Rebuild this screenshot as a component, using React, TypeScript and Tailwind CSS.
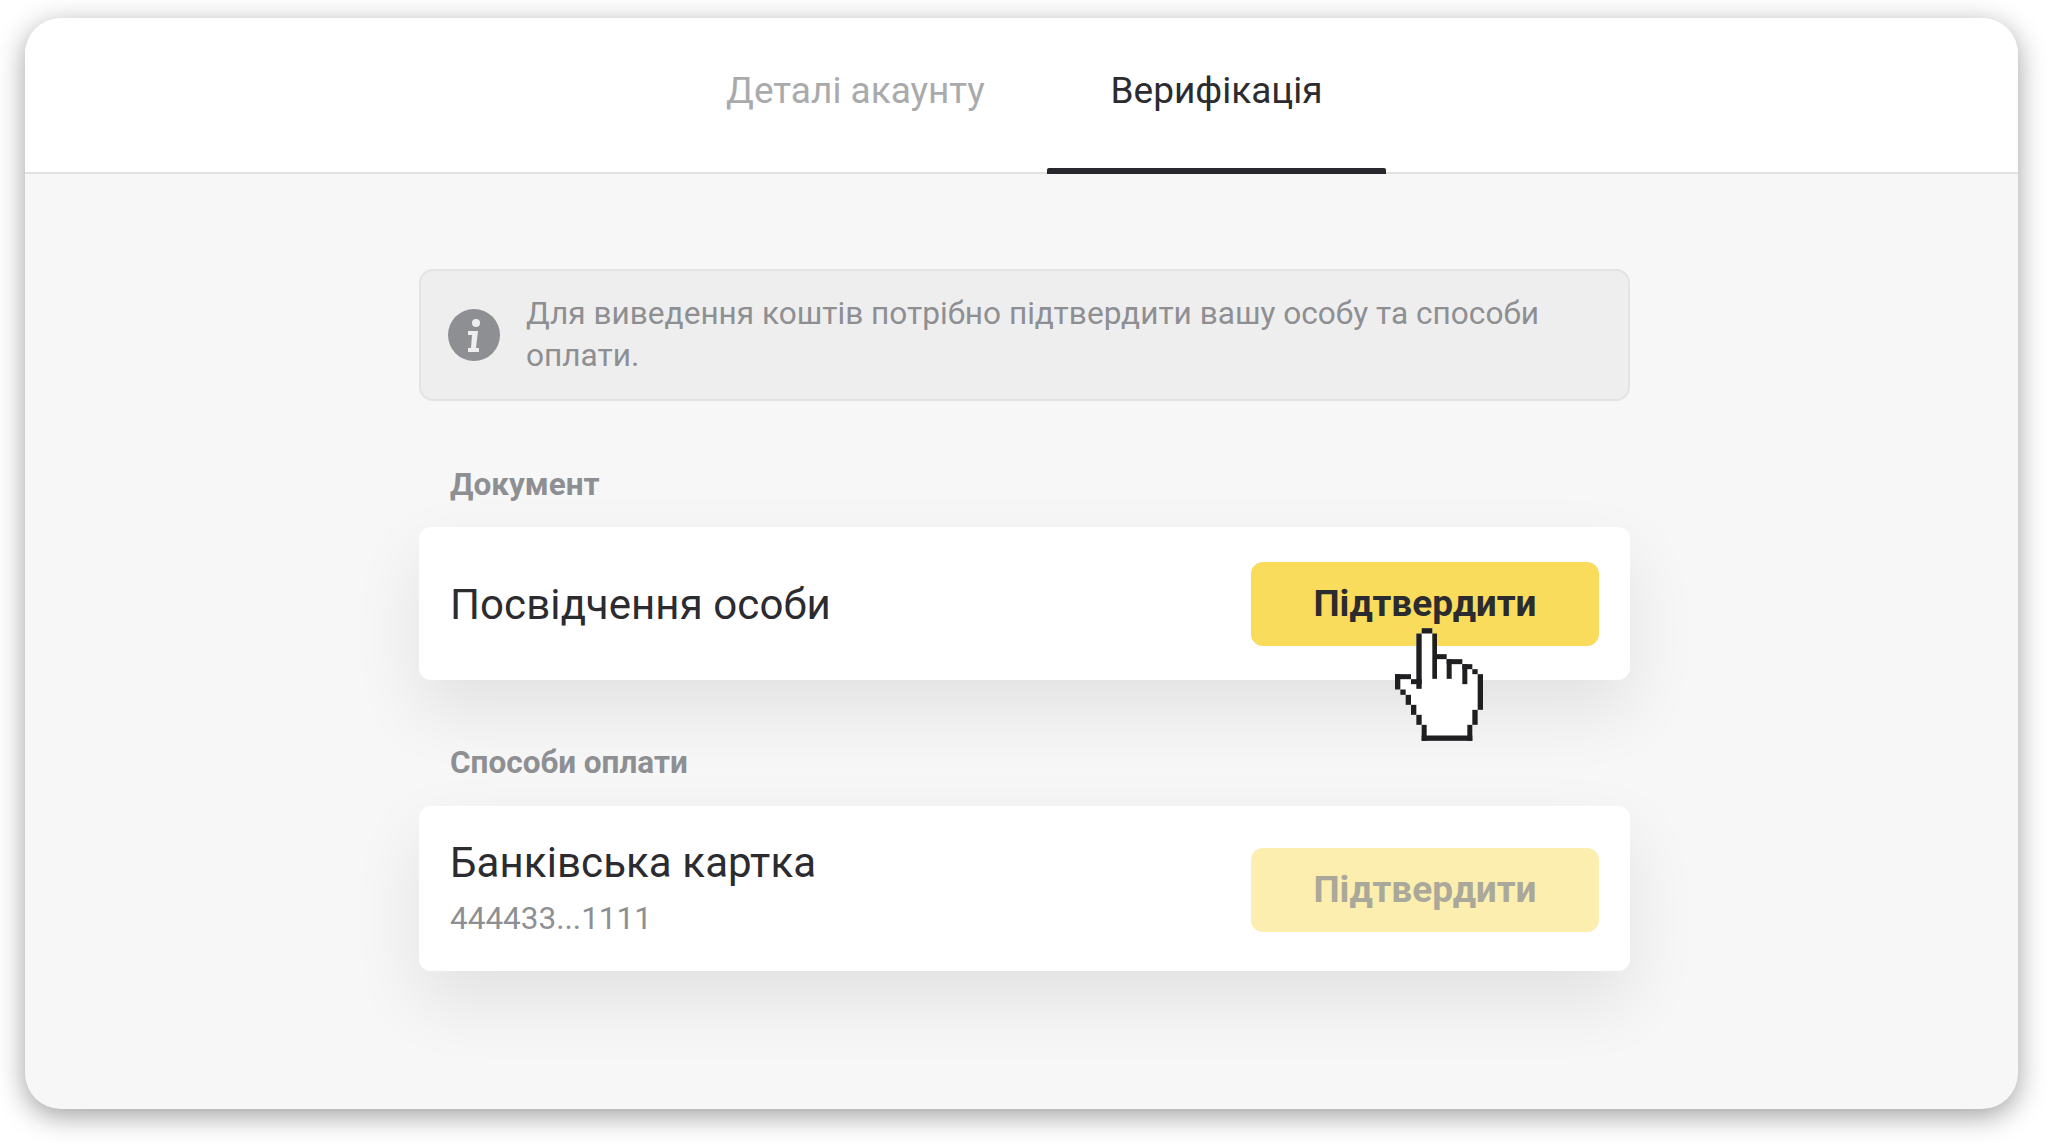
const FONT = "font-['Roboto','Noto_Sans',sans-serif]";

function InfoIcon() {
  return (
    <svg width="52" height="52" viewBox="0 0 52 52" className="shrink-0">
      <circle cx="26" cy="26" r="26" fill="#8e8f92" />
      <circle cx="28" cy="14" r="4" fill="#eeeeee" />
      <path d="M20 22h10l-2 17h3v4H20v-4h3l1-13h-4z" fill="#eeeeee" />
    </svg>
  );
}

function HandCursor() {
  const outline = [
    [245, 265, 32, 16], [229, 281, 16, 166], [277, 281, 14, 136], [291, 343, 29, 15],
    [320, 358, 15, 59], [320, 358, 47, 15], [367, 373, 15, 60], [367, 373, 30, 15],
    [397, 388, 16, 15], [413, 403, 16, 107], [397, 510, 16, 45], [382, 555, 15, 48],
    [245, 587, 152, 16], [245, 555, 15, 48], [229, 525, 16, 30], [213, 495, 16, 30],
    [197, 465, 16, 30], [181, 449, 16, 16], [165, 403, 16, 46], [165, 403, 48, 15],
    [213, 418, 32, 15],
  ];
  return (
    <svg
      width="88"
      height="113"
      viewBox="165 265 264 338"
      className="absolute left-[1395px] top-[628px]"
    >
      <path
        d="M245 265h32v78h43v15h47v15h30v15h16v15h16v107h-16v45h-15v48H245v-48h-16v-30h-16v-30h-16v-30h-16v-16h-16v-46h48v15h16V281h16z"
        fill="#ffffff"
      />
      {outline.map(([x, y, w, h], i) => (
        <rect key={i} x={x} y={y} width={w} height={h} fill="#1f1f21" />
      ))}
    </svg>
  );
}

export default function App() {
  return (
    <div className={`relative w-[2048px] h-[1145px] bg-white overflow-hidden pt-[18px] px-[25px] ${FONT}`}>
      <div className="w-[1993px] h-[1091px] rounded-[36px] bg-[#f7f7f7] overflow-hidden flex flex-col shadow-[0_7px_28px_rgba(0,0,0,0.38)]">
        <div className="h-[156px] shrink-0 bg-white border-b-2 border-[#e2e2e2] flex pl-[661px] gap-[22px]">
          <div className="w-[339px] flex items-center justify-center pb-[9px] text-[37px] text-[#a9aaac]">
            Деталі акаунту
          </div>
          <div className="relative w-[339px] flex items-center justify-center pb-[9px] text-[37px] text-[#2b2b30]">
            Верифікація
            <div className="absolute left-0 right-0 -bottom-[2px] h-[6px] bg-[#27272c] rounded-t-[2px]" />
          </div>
        </div>

        <div className="w-[1211px] ml-[394px] pt-[95px] flex flex-col">
          <div className="h-[132px] rounded-[14px] bg-[#eeeeee] border-2 border-[#e3e3e3] flex items-center pl-[27px] pr-[60px] gap-[26px]">
            <InfoIcon />
            <div className="text-[31.600px] leading-[42px] text-[#8e8f92]">
              Для виведення коштів потрібно підтвердити вашу особу та способи оплати.
            </div>
          </div>

          <div className="mt-[67px] pl-[31px] h-[34px] flex items-center text-[31.500px] font-bold text-[#8e8f92]">
            Документ
          </div>
          <div className="mt-[25px] h-[153px] rounded-[12px] bg-white flex items-center justify-between pl-[31px] pr-[31px] shadow-[0_30px_70px_rgba(0,0,0,0.09)]">
            <div className="pt-[2px] text-[42px] text-[#2b2b30] tracking-[0.1px]">Посвідчення особи</div>
            <div className="w-[348px] h-[84px] rounded-[12px] bg-[#f9dc5c] flex items-center justify-center text-[37px] font-bold text-[#2b2b30]">
              Підтвердити
            </div>
          </div>

          <div className="mt-[66px] pl-[31px] h-[34px] flex items-center text-[31.500px] font-bold text-[#8e8f92]">
            Способи оплати
          </div>
          <div className="mt-[26px] h-[165px] rounded-[12px] bg-white flex items-center justify-between pl-[31px] pr-[31px] shadow-[0_30px_70px_rgba(0,0,0,0.09)]">
            <div className="flex flex-col pt-[4px]">
              <div className="text-[42px] leading-[56px] text-[#2b2b30] tracking-[0.1px]">Банківська картка</div>
              <div className="text-[31.500px] leading-[56px] text-[#8e8f92]">444433...1111</div>
            </div>
            <div className="w-[348px] h-[84px] mt-[2px] pt-[1px] rounded-[12px] bg-[#fbeeae] flex items-center justify-center text-[37px] font-bold text-[#a9a89a]">
              Підтвердити
            </div>
          </div>
        </div>
      </div>
      <HandCursor />
    </div>
  );
}
